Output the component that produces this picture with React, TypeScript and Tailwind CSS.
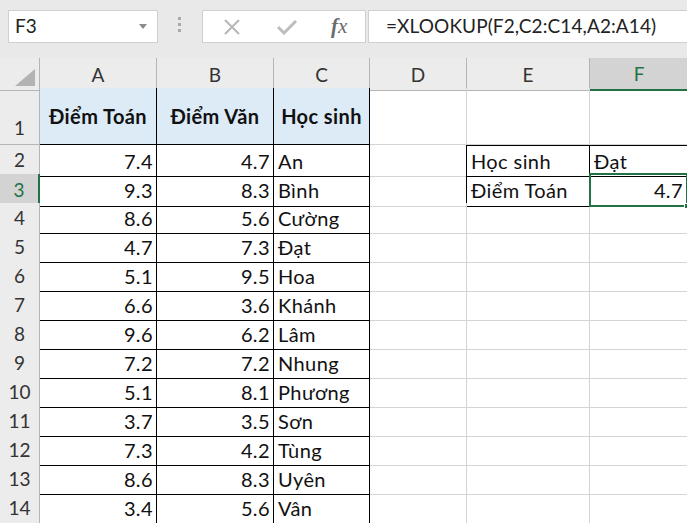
import React from "react";

const cols = ["A", "B", "C", "D", "E", "F"];

const toan = ["7.4", "9.3", "8.6", "4.7", "5.1", "6.6", "9.6", "7.2", "5.1", "3.7", "7.3", "8.6", "3.4"];
const van = ["4.7", "8.3", "5.6", "7.3", "9.5", "3.6", "6.2", "7.2", "8.1", "3.5", "4.2", "8.3", "5.6"];
const names = ["An", "Bình", "Cường", "Đạt", "Hoa", "Khánh", "Lâm", "Nhung", "Phương", "Sơn", "Tùng", "Uyên", "Vân"];

const gridCols = "grid grid-cols-[40px_117px_117px_96px_97px_123px_98px]";

function FormulaBar() {
  return (
    <div className="flex h-[58px] items-start bg-[#e9e9e9] pt-[10px]">
      <div className="ml-[8px] flex h-[33px] w-[150px] items-center justify-between border border-[#d0d0d0] bg-white pl-[6px] pr-[10px]">
        <span className="text-[19px] text-[#222]">F3</span>
        <svg width="8" height="5" viewBox="0 0 8 5">
          <path d="M0 0h8L4 5z" fill="#8a8a8a" />
        </svg>
      </div>
      <div className="ml-[20px] mt-[7px] flex flex-col gap-[3px]">
        <div className="h-[3px] w-[3px] bg-[#a9a9a9]" />
        <div className="h-[3px] w-[3px] bg-[#a9a9a9]" />
        <div className="h-[3px] w-[3px] bg-[#a9a9a9]" />
      </div>
      <div className="ml-[21px] flex h-[33px] w-[164px] items-center border border-[#d0d0d0] bg-white">
        <svg className="ml-[20px]" width="18" height="18" viewBox="0 0 18 18">
          <path d="M2 2L16 16M16 2L2 16" stroke="#b7b7b7" strokeWidth="2" />
        </svg>
        <svg className="ml-[36px]" width="20" height="16" viewBox="0 0 20 16">
          <path d="M1 8L7 14L19 2" stroke="#bdbdbd" strokeWidth="3" fill="none" />
        </svg>
        <span
          className="ml-[34px] text-[21px] italic text-[#6b6b6b]"
          style={{ fontFamily: '"Liberation Serif", serif' }}
        >
          <span className="font-bold">f</span>x
        </span>
      </div>
      <div className="ml-[2px] flex h-[33px] flex-1 items-center border border-r-0 border-[#d0d0d0] bg-white pl-[17px]">
        <span className="text-[19px] tracking-[0.1px] text-[#222]">=XLOOKUP(F2,C2:C14,A2:A14)</span>
      </div>
    </div>
  );
}

function HeaderRow() {
  return (
    <div className={`${gridCols} h-[30px]`}>
      <div className="relative border-b border-r border-[#b5b5b5] bg-[#ececec]">
        <svg className="absolute bottom-[4px] right-[4px]" width="20" height="17" viewBox="0 0 20 17">
          <path d="M20 0V17H0z" fill="#b3b3b3" />
        </svg>
      </div>
      {cols.map((c) =>
        c === "F" ? (
          <div
            key={c}
            className="flex items-center justify-center border-b-2 border-[#217346] bg-[#d3d3d3] pt-[2px] text-[19px] text-[#217346]"
          >
            {c}
          </div>
        ) : (
          <div
            key={c}
            className="flex items-center justify-center border-b border-r border-[#b5b5b5] bg-[#ececec] pt-[2px] text-[19px] text-[#333]"
          >
            {c}
          </div>
        )
      )}
    </div>
  );
}

function RowHead({ n, tall }: { n: number; tall?: boolean }) {
  const sel = n === 3;
  return (
    <div
      className={`flex justify-center border-b text-[19px] tracking-normal ${tall ? "items-end pb-[2px]" : "items-center"} ${
        sel
          ? "border-r-2 border-b-[#b5b5b5] border-r-[#217346] bg-[#d3d3d3] text-[#217346]"
          : "border-r border-[#b5b5b5] bg-[#ececec] text-[#333]"
      }`}
    >
      {n}
    </div>
  );
}

export default function App() {
  return (
    <div
      className="h-[523px] w-[687px] overflow-hidden bg-white text-[#111]"
      style={{ fontFamily: 'Lato, "Noto Sans", sans-serif' }}
    >
      <FormulaBar />
      <HeaderRow />
      <div className={`${gridCols} h-[57px] text-[20px] tracking-[0.4px]`}>
        <RowHead n={1} tall />
        <div className="flex items-center justify-center border-b border-r border-black bg-[#ddebf7] font-bold">
          Điểm Toán
        </div>
        <div className="flex items-center justify-center border-b border-r border-black bg-[#ddebf7] font-bold">
          Điểm Văn
        </div>
        <div className="flex items-center justify-center border-b border-r border-black bg-[#ddebf7] font-bold">
          Học sinh
        </div>
        <div className="border-b border-r border-[#d4d4d4]" />
        <div className="border-b border-r border-[#d4d4d4]" />
        <div className="border-b border-r border-[#d4d4d4]" />
      </div>
      {names.map((name, i) => {
        const r = i + 2;
        return (
          <div key={r} className={`${gridCols} h-[29px] text-[20px] tracking-[0.4px]`}>
            <RowHead n={r} />
            <div className="flex items-center justify-end border-b border-r border-black pr-[3px]">
              {toan[i]}
            </div>
            <div className="flex items-center justify-end border-b border-r border-black pr-[3px]">
              {van[i]}
            </div>
            <div className="flex items-center border-b border-r border-black pl-[4px]">
              {name}
            </div>
            <div className="border-b border-r border-[#d4d4d4]" />
            {r === 2 && (
              <>
                <div className="-ml-px flex items-center border border-black pl-[4px]">Học sinh</div>
                <div className="-ml-px flex items-center border border-black pl-[4px]">Đạt</div>
              </>
            )}
            {r === 3 && (
              <>
                <div className="-ml-px flex items-center border-b border-l border-r border-black pl-[4px]">
                  Điểm Toán
                </div>
                <div className="relative -ml-px -mt-px flex items-center justify-end border-2 border-[#217346] pr-[3px]">
                  4.7
                  <div className="absolute -bottom-[4px] -right-[4px] h-[6px] w-[6px] border border-white bg-[#217346]" />
                </div>
              </>
            )}
            {r > 3 && (
              <>
                <div className="border-b border-r border-[#d4d4d4]" />
                <div className="border-b border-r border-[#d4d4d4]" />
              </>
            )}
          </div>
        );
      })}
    </div>
  );
}
